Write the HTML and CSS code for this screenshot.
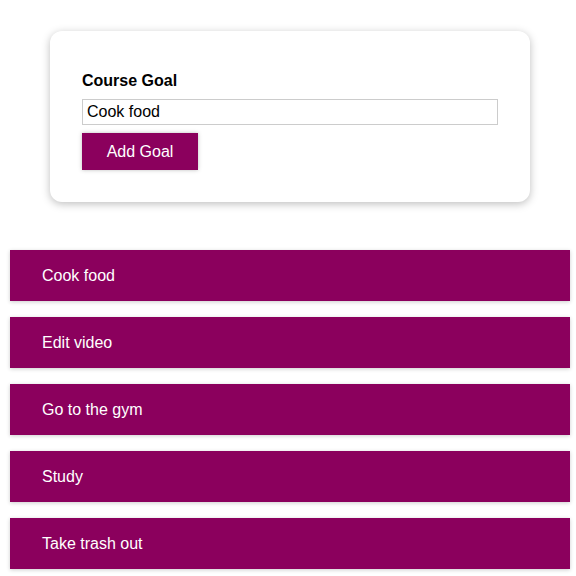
FILE: index.html
```html
<!DOCTYPE html>
<html>
<head>
<meta charset="utf-8">
<link rel="stylesheet" href="styles.css">
</head>
<body>
<section class="goal-form">
  <form>
    <div class="form-control">
      <label>Course Goal</label>
      <input type="text" value="Cook food">
    </div>
    <button type="button" class="button">Add Goal</button>
  </form>
</section>
<section class="goals">
  <ul class="goal-list">
    <li class="goal-item">Cook food</li>
    <li class="goal-item">Edit video</li>
    <li class="goal-item">Go to the gym</li>
    <li class="goal-item">Study</li>
    <li class="goal-item">Take trash out</li>
  </ul>
</section>
</body>
</html>
```

FILE: styles.css
```css
* { box-sizing: border-box; }
html, body { margin: 0; padding: 0; background: #fff; }
body {
  font-family: "Liberation Sans", Arial, sans-serif;
  font-size: 16px;
  overflow: hidden;
}
.goal-form {
  width: 480px;
  margin: 31px 0 0 50px;
  padding: 32px;
  border-radius: 12px;
  background: #fff;
  box-shadow: 0 2px 8px rgba(0, 0, 0, 0.26);
}
.goal-form form { margin: 0; }
.form-control { margin: 8px 0; }
.form-control label {
  display: block;
  font-weight: bold;
  line-height: 20px;
  margin-bottom: 8px;
  color: #000;
}
.form-control input {
  display: block;
  width: 100%;
  border: 1px solid #ccc;
  font: inherit;
  line-height: 23px;
  height: 26px;
  padding: 0 4px;
  color: #000;
  margin: 0;
}
.button {
  display: block;
  font: inherit;
  white-space: nowrap;
  padding: 0;
  height: 37px;
  width: 116px;
  line-height: 35px;
  text-align: center;
  border: 1px solid #8b005d;
  color: #fff;
  background: #8b005d;
  box-shadow: 0 0 4px rgba(0, 0, 0, 0.26);
  margin: 1px 0 0 0;
}
.goals {
  width: 560px;
  margin: 48px 0 0 10px;
}
.goal-list {
  list-style: none;
  margin: 0;
  padding: 0;
}
.goal-item {
  margin: 0 0 16px 0;
  height: 51px;
  background: #8b005d;
  box-shadow: 0 1px 4px rgba(0, 0, 0, 0.2);
  color: #fff;
  padding: 16px 32px;
  line-height: 19px;
}
```
